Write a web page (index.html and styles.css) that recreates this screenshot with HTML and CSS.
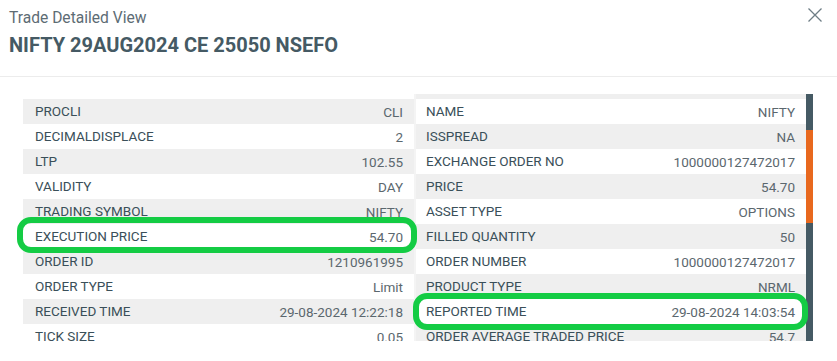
FILE: index.html
```html
<!DOCTYPE html>
<html lang="en">
<head>
    <meta charset="UTF-8">
    <meta name="viewport" content="width=device-width, initial-scale=1.0">
    <title>Trade Detailed View</title>
    <link rel="stylesheet" href="styles.css">
</head>
<body>

<!-- Modal header -->
<div class="modal-header">
    <div class="modal-titles">
        <div class="modal-subtitle">Trade Detailed View</div>
        <h1 class="modal-title">NIFTY 29AUG2024 CE 25050 NSEFO</h1>
    </div>
    <button class="close-btn" aria-label="Close">
        <svg width="16" height="16" viewBox="0 0 16 16">
            <path d="M1.5 1.5 L14.5 14.5 M14.5 1.5 L1.5 14.5" stroke="#6e7d85" stroke-width="1.3" fill="none"/>
        </svg>
    </button>
</div>

<!-- Trade details -->
<div class="details-wrap">
    <div class="details-grid">
        <div class="detail-col left-col">
            <div class="detail-row"><span class="label">PROCLI</span><span class="value">CLI</span></div>
            <div class="detail-row"><span class="label">DECIMALDISPLACE</span><span class="value">2</span></div>
            <div class="detail-row"><span class="label">LTP</span><span class="value">102.55</span></div>
            <div class="detail-row"><span class="label">VALIDITY</span><span class="value">DAY</span></div>
            <div class="detail-row"><span class="label">TRADING SYMBOL</span><span class="value">NIFTY</span></div>
            <div class="detail-row"><span class="label">EXECUTION PRICE</span><span class="value">54.70</span></div>
            <div class="detail-row"><span class="label">ORDER ID</span><span class="value">1210961995</span></div>
            <div class="detail-row"><span class="label">ORDER TYPE</span><span class="value">Limit</span></div>
            <div class="detail-row"><span class="label">RECEIVED TIME</span><span class="value">29-08-2024 12:22:18</span></div>
            <div class="detail-row"><span class="label">TICK SIZE</span><span class="value">0.05</span></div>
        </div>
        <div class="detail-col right-col">
            <div class="detail-row"><span class="label">NAME</span><span class="value">NIFTY</span></div>
            <div class="detail-row"><span class="label">ISSPREAD</span><span class="value">NA</span></div>
            <div class="detail-row"><span class="label">EXCHANGE ORDER NO</span><span class="value">1000000127472017</span></div>
            <div class="detail-row"><span class="label">PRICE</span><span class="value">54.70</span></div>
            <div class="detail-row"><span class="label">ASSET TYPE</span><span class="value">OPTIONS</span></div>
            <div class="detail-row"><span class="label">FILLED QUANTITY</span><span class="value">50</span></div>
            <div class="detail-row"><span class="label">ORDER NUMBER</span><span class="value">1000000127472017</span></div>
            <div class="detail-row"><span class="label">PRODUCT TYPE</span><span class="value">NRML</span></div>
            <div class="detail-row"><span class="label">REPORTED TIME</span><span class="value">29-08-2024 14:03:54</span></div>
            <div class="detail-row"><span class="label">ORDER AVERAGE TRADED PRICE</span><span class="value">54.7</span></div>
        </div>
    </div>
    <!-- scrollbar -->
    <div class="scroll-track">
        <div class="scroll-thumb"></div>
    </div>
</div>

<!-- highlight marks -->
<div class="highlight highlight-exec"></div>
<div class="highlight highlight-reported"></div>

</body>
</html>
```

FILE: styles.css
```css
html, body {
    margin: 0;
    padding: 0;
}

body {
    position: relative;
    font-family: Roboto, "Liberation Sans", Arial, sans-serif;
    background-color: white;
    width: 837px;
    height: 361px;
    overflow: hidden;
}

.modal-header {
    display: flex;
    justify-content: space-between;
    align-items: flex-start;
    padding: 8px 14px 19px 9px;
    border-bottom: 1px solid #ececec;
}

.modal-subtitle {
    font-size: 15.6px;
    line-height: 20px;
    color: #5d6c74;
}

.modal-title {
    margin: 5px 0 0 0;
    font-size: 20px;
    line-height: 24px;
    font-weight: 700;
    color: #455a64;
}

.close-btn {
    background: none;
    border: none;
    padding: 0;
    margin-top: -1px;
    cursor: pointer;
    line-height: 0;
}

.details-wrap {
    display: flex;
    margin: 17px 24px 0 23px;
    height: 247px;
    overflow: hidden;
}

.details-grid {
    flex: 1;
    display: grid;
    grid-template-columns: 391px 390px;
    column-gap: 2px;
    background-color: #f4f4f4;
    align-content: start;
}

.left-col {
    background-color: white;
    padding-top: 5px;
}

.right-col {
    border-top: 5px solid #efefef;
    background-color: white;
}

.detail-row {
    display: flex;
    justify-content: space-between;
    height: 25px;
    line-height: 24px;
    font-size: 13.5px;
}

.left-col .detail-row {
    padding: 0 11px 0 12px;
}

.right-col .detail-row {
    padding: 0 11px 0 10px;
}

.left-col .detail-row:nth-child(odd),
.right-col .detail-row:nth-child(even) {
    background-color: #efefef;
}

.label {
    color: #3a4f59;
}

.value {
    color: #5b676e;
    padding-top: 1px;
}

.scroll-track {
    width: 7px;
    background-color: #455a64;
}

.scroll-thumb {
    margin-top: 36px;
    height: 93px;
    background-color: #e8681e;
}

.highlight {
    position: absolute;
    border: 6px solid #14cc44;
    border-radius: 14px;
    box-sizing: border-box;
}

.highlight-exec {
    left: 17px;
    top: 217px;
    width: 400px;
    height: 36px;
}

.highlight-reported {
    left: 413px;
    top: 293px;
    width: 395px;
    height: 37px;
}
```
